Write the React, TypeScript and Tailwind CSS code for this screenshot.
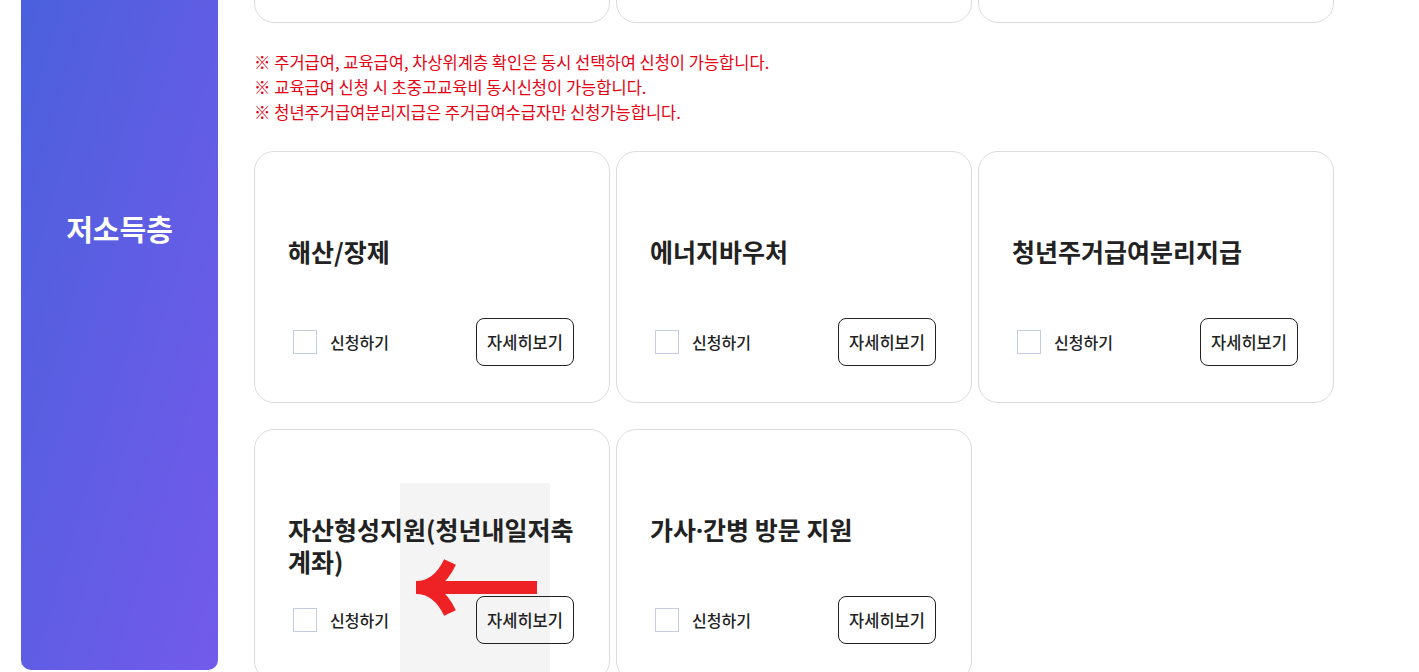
import React from "react";

type Item = { title: React.ReactNode; highlight?: boolean };

const rows: Item[] = [
  { title: "해산/장제" },
  { title: "에너지바우처" },
  { title: "청년주거급여분리지급" },
  { title: "자산형성지원(청년내일저축계좌)", highlight: true },
  {
    title: (
      <>
        가사<span style={{ fontFamily: '"Noto Sans", sans-serif' }}>·</span>간병 방문 지원
      </>
    ),
  },
];

const notes = [
  "※ 주거급여, 교육급여, 차상위계층 확인은 동시 선택하여 신청이 가능합니다.",
  "※ 교육급여 신청 시 초중고교육비 동시신청이 가능합니다.",
  "※ 청년주거급여분리지급은 주거급여수급자만 신청가능합니다.",
];

function Card({ item }: { item: Item }) {
  return (
    <div className="relative flex h-[252px] flex-col justify-between overflow-hidden rounded-[20px] border border-[#dcdcdc] bg-white px-[33px] pt-[83px] pb-[36px]">
      {/* guide highlight + arrow */}
      {item.highlight && (
        <div className="absolute top-[53px] left-[145px] h-[260px] w-[150px] bg-[#f4f4f4]"></div>
      )}
      <h3 className="relative text-[25px] leading-[32px] font-bold text-[#222]">{item.title}</h3>
      <div className="relative flex items-center justify-between pr-[2px]">
        <label className="flex items-center gap-[13px] pl-[5px]">
          <span className="block h-[24px] w-[24px] border border-[#c5cbe3] bg-white"></span>
          <span className="text-[16px] font-medium text-[#222]">신청하기</span>
        </label>
        <button className="h-[48px] w-[98px] rounded-[8px] border border-[#222] bg-transparent text-[16.5px] font-medium text-[#222]">
          자세히보기
        </button>
      </div>
      {item.highlight && (
        <svg className="absolute top-[127px] left-[156px]" width="130" height="64" viewBox="0 0 130 64">
          <rect x="6" y="24" width="120" height="13" fill="#ee2224" />
          <path d="M39 5 Q27 30.5 5 30.5" stroke="#ee2224" strokeWidth="13" fill="none" />
          <path d="M39 56 Q27 30.5 5 30.5" stroke="#ee2224" strokeWidth="13" fill="none" />
        </svg>
      )}
    </div>
  );
}

export default function App() {
  return (
    <div
      className="flex h-[672px] overflow-hidden bg-white pl-[21px]"
      style={{ fontFamily: '"Noto Sans CJK KR", "Noto Sans", sans-serif' }}
    >
      {/* Category panel */}
      <div className="h-[670px] w-[197px] shrink-0 rounded-b-[10px] bg-linear-to-br from-[#4a60dc] to-[#725aeb] pt-[208px] text-center">
        <h2 className="text-[29px] leading-[40px] font-bold text-white">저소득층</h2>
      </div>

      <div className="ml-[36px] w-[1080px]">
        {/* previous row, scrolled mostly out of view */}
        <div className="mt-[-229px] grid grid-cols-3 gap-x-[6px]">
          {[0, 1, 2].map((i) => (
            <div key={i} className="h-[252px] rounded-[20px] border border-[#dcdcdc] bg-white"></div>
          ))}
        </div>

        <ul className="mt-[27px] mb-[26px] text-[16.5px] leading-[25px] text-[#e60012]">
          {notes.map((n, i) => (
            <li key={i}>{n}</li>
          ))}
        </ul>

        <div className="grid grid-cols-3 gap-x-[6px] gap-y-[26px]">
          {rows.map((item, i) => (
            <Card key={i} item={item} />
          ))}
        </div>
      </div>
    </div>
  );
}
